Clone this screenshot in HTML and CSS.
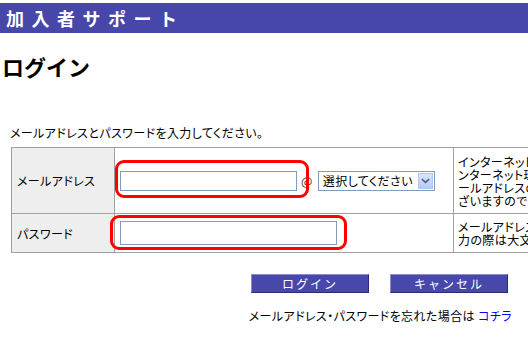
FILE: index.html
```html
<!DOCTYPE html>
<html>
<head>
    <meta charset="utf-8">
    <link rel="stylesheet" href="styles.css">
</head>
<body>
    <div class="brand">加入者サポート</div>

    <h1 class="title">ログイン</h1>

    <p class="lead">メールアドレスとパスワードを入力してください。</p>

    <table class="login-table">
        <colgroup>
            <col class="col-label">
            <col class="col-field">
            <col class="col-note">
        </colgroup>
        <tr class="row-mail">
            <th>メールアドレス</th>
            <td class="field">
                <div class="field-line">
                    <span class="mark mark-mail"><input type="text" class="text-input mail-input"></span>
                    <span class="at">@</span>
                    <div class="select">
                        <span class="select-text">選択してください</span>
                        <span class="select-btn">
                            <svg viewBox="0 0 10 6" width="9" height="6">
                                <path d="M1 1 L5 4.5 L9 1" fill="none" stroke="#4d6185" stroke-width="1.8"/>
                            </svg>
                        </span>
                    </div>
                </div>
            </td>
            <td class="note">インターネットサービスをご利用のイ<br>ンターネット環境によっては、メ<br>ールアドレスのドメインが異なる場合がご<br>ざいますのでご注意ください。</td>
        </tr>
        <tr class="row-pass">
            <th>パスワード</th>
            <td class="field">
                <div class="field-line">
                    <span class="mark mark-pass"><input type="password" class="text-input pass-input"></span>
                </div>
            </td>
            <td class="note">メールアドレス・パスワードの入<br>力の際は大文字・小文字を区別してください。</td>
        </tr>
    </table>

    <div class="actions">
        <button class="btn">ログイン</button>
        <button class="btn">キャンセル</button>
    </div>

    <p class="forgot">メールアドレス・パスワードを忘れた場合は <a href="#">コチラ</a></p>
</body>
</html>
```

FILE: styles.css
```css
html {
    overflow: hidden;
}

body {
    margin: 0;
    width: 528px;
    font-family: "Noto Sans CJK JP", "DejaVu Sans", sans-serif;
    font-size: 12px;
    letter-spacing: 0.4px;
    color: #000;
    background: #fff;
    font-feature-settings: "palt";
}

.brand {
    margin-top: 3px;
    height: 30px;
    line-height: 30px;
    padding-left: 6px;
    background: #4747a9;
    color: #fff;
    font-size: 18px;
    font-weight: bold;
    letter-spacing: 7.5px;
    font-feature-settings: normal;
}

.title {
    margin: 22px 0 0 2px;
    font-size: 22px;
    line-height: 22px;
    font-weight: bold;
    letter-spacing: 0;
    font-feature-settings: normal;
}

.lead {
    margin: 49px 0 0 10px;
    line-height: 14px;
}

.login-table {
    margin: 7px 0 0 11px;
    border-collapse: collapse;
    table-layout: fixed;
    width: 700px;
}

.col-label {
    width: 103px;
}

.col-field {
    width: 339px;
}

.col-note {
    width: 258px;
}

.login-table th,
.login-table td {
    border: 1px solid #a0a0a0;
    padding: 0;
}

.login-table th {
    background: #eeeeee;
    font-weight: normal;
    text-align: left;
    padding-left: 5px;
}

.row-mail th,
.row-mail td {
    height: 65px;
}

.row-pass th,
.row-pass td {
    height: 38px;
}

.login-table .field {
    padding-left: 5px;
}

.field-line {
    display: flex;
    align-items: center;
}

.mark {
    position: relative;
    display: inline-block;
}

.mark::after {
    content: "";
    position: absolute;
    border: 3px solid #ff0000;
    border-radius: 9px;
}

.mark-mail::after {
    left: -5px;
    right: -12px;
    top: -11px;
    bottom: -7px;
}

.mark-pass::after {
    left: -10px;
    right: -10px;
    top: -6px;
    bottom: -5px;
}

.text-input {
    display: block;
    box-sizing: border-box;
    margin: 0;
    border: 1px solid #7f9db9;
    background: #fff;
    padding: 0 2px;
}

.mail-input {
    width: 177px;
    height: 20px;
}

.pass-input {
    width: 217px;
    height: 24px;
}

.at {
    margin: 0 5px 0 4px;
    font-size: 12px;
    color: #333;
}

.select {
    box-sizing: border-box;
    width: 117px;
    height: 20px;
    border: 1px solid #7f9db9;
    display: flex;
    align-items: center;
    justify-content: space-between;
    padding: 1px 1px 1px 4px;
    font-size: 12px;
}

.select-btn {
    width: 15px;
    height: 16px;
    background: linear-gradient(#d8e4fb, #b7cbf5);
    border: 1px solid #b3c6ee;
    box-sizing: border-box;
    display: flex;
    align-items: center;
    justify-content: center;
}

.login-table .note {
    padding-left: 4px;
    line-height: 13px;
    white-space: nowrap;
    overflow: hidden;
    vertical-align: middle;
}

.actions {
    display: flex;
    justify-content: flex-end;
    gap: 21px;
    margin-top: 21px;
    padding-right: 20px;
}

.btn {
    width: 118px;
    height: 19px;
    padding: 0;
    background: #4848aa;
    color: #fff;
    font-family: inherit;
    font-size: 12px;
    letter-spacing: 2px;
    border: 1px solid;
    border-color: #8a8ad0 #2a2a78 #2a2a78 #8a8ad0;
    cursor: pointer;
}

.forgot {
    margin: 14px 16px 0 0;
    text-align: right;
}

.forgot a {
    color: #0000ff;
    text-decoration: none;
}
```
